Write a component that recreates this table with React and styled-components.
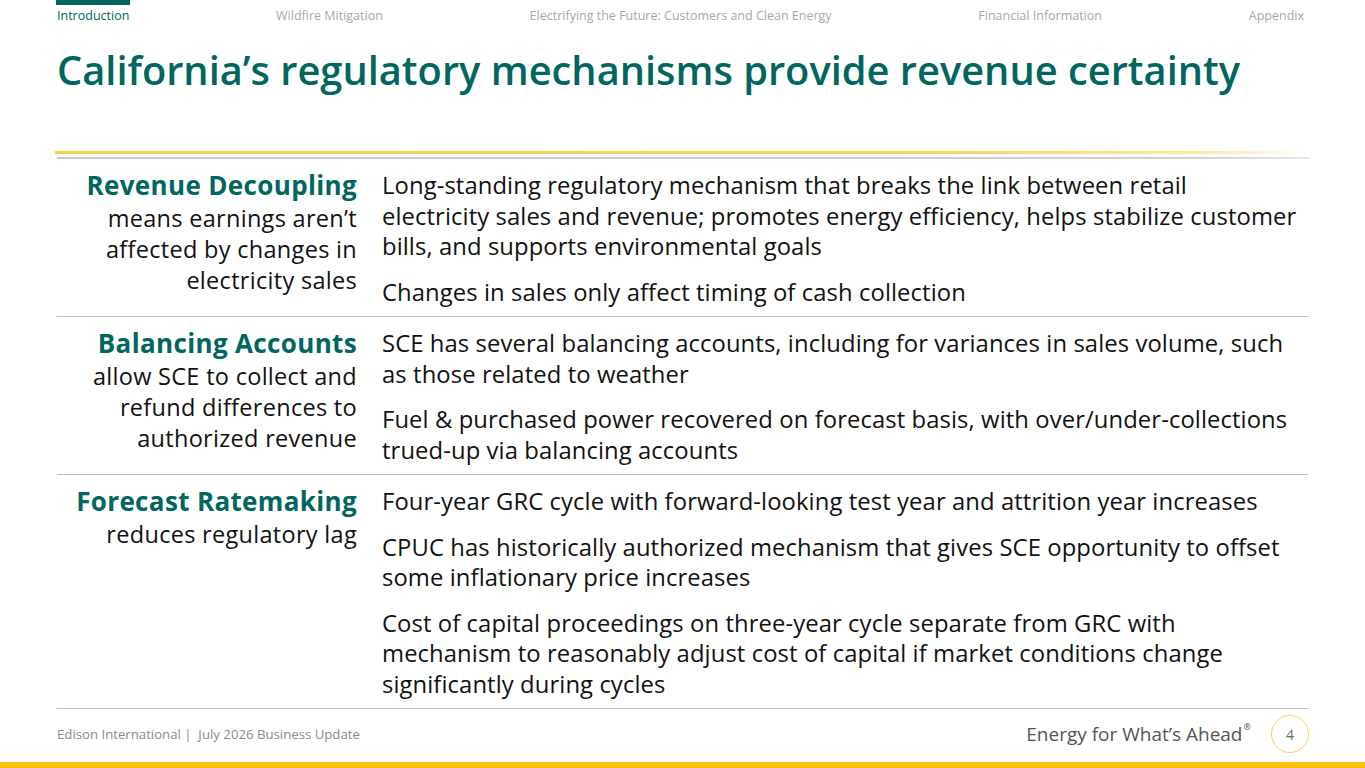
import React from 'react';
import styled, { createGlobalStyle } from 'styled-components';

const GlobalStyle = createGlobalStyle`
  html, body {
    margin: 0;
    padding: 0;
    background: #fff;
  }
  body {
    font-family: "Open Sans", "Noto Sans", sans-serif;
    color: #111;
  }
`;

const TEAL = '#00665e';

const rows = [
  {
    title: 'Revenue Decoupling',
    sub: ['means earnings aren’t', 'affected by changes in', 'electricity sales'],
    points: [
      [
        'Long-standing regulatory mechanism that breaks the link between retail',
        'electricity sales and revenue; promotes energy efficiency, helps stabilize customer',
        'bills, and supports environmental goals',
      ],
      ['Changes in sales only affect timing of cash collection'],
    ],
  },
  {
    title: 'Balancing Accounts',
    sub: ['allow SCE to collect and', 'refund differences to', 'authorized revenue'],
    points: [
      [
        'SCE has several balancing accounts, including for variances in sales volume, such',
        'as those related to weather',
      ],
      [
        'Fuel & purchased power recovered on forecast basis, with over/under-collections',
        'trued-up via balancing accounts',
      ],
    ],
  },
  {
    title: 'Forecast Ratemaking',
    sub: ['reduces regulatory lag'],
    points: [
      ['Four-year GRC cycle with forward-looking test year and attrition year increases'],
      [
        'CPUC has historically authorized mechanism that gives SCE opportunity to offset',
        'some inflationary price increases',
      ],
      [
        'Cost of capital proceedings on three-year cycle separate from GRC with',
        'mechanism to reasonably adjust cost of capital if market conditions change',
        'significantly during cycles',
      ],
    ],
  },
];

const navItems = [
  'Introduction',
  'Wildfire Mitigation',
  'Electrifying the Future: Customers and Clean Energy',
  'Financial Information',
  'Appendix',
];

const Lines = ({ lines }) =>
  lines.map((l, i) => (
    <React.Fragment key={i}>
      {l}
      {i < lines.length - 1 && <br />}
    </React.Fragment>
  ));

const App = () => {
  return (
    <Slide>
      <GlobalStyle />
      <Nav>
        {navItems.map((item, i) => (
          <NavItem key={item} active={i === 0}>
            {item}
          </NavItem>
        ))}
      </Nav>
      <Title>California’s regulatory mechanisms provide revenue certainty</Title>
      <Rules>
        <GoldRule />
        <GreyRule />
      </Rules>
      <Table>
        {rows.map((row) => (
          <Row key={row.title}>
            <Label>
              <LabelTitle>{row.title}</LabelTitle>
              <LabelSub>
                <Lines lines={row.sub} />
              </LabelSub>
            </Label>
            <Points>
              {row.points.map((p, i) => (
                <Point key={i}>
                  <Lines lines={p} />
                </Point>
              ))}
            </Points>
          </Row>
        ))}
      </Table>
      <Footer>
        <FooterLeft>Edison International |&nbsp; July 2026 Business Update</FooterLeft>
        <FooterRight>
          <Tagline>
            Energy for What’s Ahead<sup>®</sup>
          </Tagline>
          <PageNum>4</PageNum>
        </FooterRight>
      </Footer>
      <BottomBar />
    </Slide>
  );
};

const Slide = styled.div`
  width: 1365px;
  height: 768px;
  position: relative;
  overflow: hidden;
  display: flex;
  flex-direction: column;
  background: #fff;
`;

const Nav = styled.nav`
  display: flex;
  justify-content: space-between;
  margin: 0 61px 0 57px;
  height: 30px;
`;

const NavItem = styled.div`
  position: relative;
  padding-top: 7px;
  font-size: 12.5px;
  color: ${(p) => (p.active ? TEAL : '#a8a8a8')};
  white-space: nowrap;

  &::before {
    content: '';
    display: ${(p) => (p.active ? 'block' : 'none')};
    position: absolute;
    top: 0;
    left: -1px;
    right: -1px;
    height: 5px;
    background: ${TEAL};
  }
`;

const Title = styled.h1`
  margin: 14px 0 0 57px;
  font-size: 39.8px;
  font-weight: 600;
  line-height: 52px;
  color: ${TEAL};
  white-space: nowrap;
`;

const Rules = styled.div`
  margin: 55px 55px 0 55px;
`;

const GoldRule = styled.div`
  height: 3px;
  background: linear-gradient(to right, #fbcf4a 0%, #fbd35a 70%, #fde9a8 92%, #fff 100%);
`;

const GreyRule = styled.div`
  height: 2px;
  margin-top: 3px;
  margin-left: 2px;
  background: linear-gradient(to right, #c9c9c9 0%, #cfcfcf 90%, #e8e8e8 100%);
`;

const Table = styled.div`
  margin: 0 57px 0 57px;
  border-bottom: 1px solid #bdbdbd;
`;

const Row = styled.div`
  display: grid;
  grid-template-columns: 300px 1fr;
  column-gap: 25px;
  padding: 11px 0 9px;

  & + & {
    border-top: 1px solid #bdbdbd;
  }
`;

const Label = styled.div`
  text-align: right;
  white-space: nowrap;
`;

const LabelTitle = styled.div`
  font-size: 26px;
  font-weight: 700;
  color: ${TEAL};
  line-height: 30px;
  letter-spacing: 0.35px;
`;

const LabelSub = styled.div`
  margin-top: 3px;
  font-size: 23.5px;
  line-height: 31px;
  letter-spacing: 0.3px;
  color: #111;
`;

const Points = styled.div`
  display: flex;
  flex-direction: column;
  gap: 15px;
`;

const Point = styled.p`
  margin: 0;
  font-size: 23.8px;
  line-height: 30.5px;
  letter-spacing: 0.1px;
  white-space: nowrap;
  color: #111;
`;

const Footer = styled.footer`
  display: flex;
  justify-content: space-between;
  align-items: center;
  margin: 6px 56px 0 57px;
  height: 38px;
`;

const FooterLeft = styled.div`
  font-size: 13.2px;
  color: #8a8a8a;
`;

const FooterRight = styled.div`
  display: flex;
  align-items: center;
  gap: 20px;
`;

const Tagline = styled.div`
  font-size: 19px;
  color: #555;

  sup {
    font-size: 9px;
    vertical-align: top;
    position: relative;
    top: -1px;
    margin-left: 1px;
  }
`;

const PageNum = styled.div`
  width: 38px;
  height: 38px;
  border: 1.5px solid #f5d257;
  border-radius: 50%;
  display: flex;
  align-items: center;
  justify-content: center;
  font-size: 14px;
  color: #666;
  box-sizing: border-box;
`;

const BottomBar = styled.div`
  position: absolute;
  left: 0;
  right: 0;
  bottom: 0;
  height: 6px;
  background: #fdc20f;
`;

export default App;
